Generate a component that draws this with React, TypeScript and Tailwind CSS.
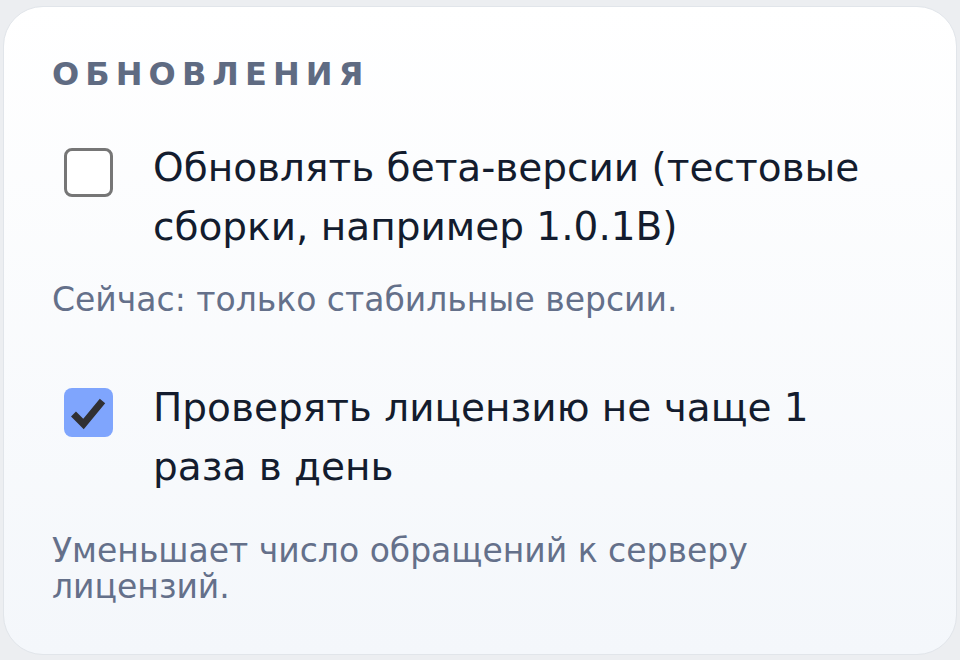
import React, { useState } from "react";

function CheckRow({ label, checked, onToggle }: { label: string; checked: boolean; onToggle: () => void }) {
    return (
        <label className="flex items-start gap-[40px] pl-[12px] cursor-pointer">
            <span
                onClick={onToggle}
                className={`mt-[10px] w-[49px] h-[49px] shrink-0 rounded-[8px] flex items-center justify-center ${checked ? "bg-[#7fa5fd]" : "border-[3px] border-[#767676] bg-white"}`}
            >
                {checked && (
                    <svg width="49" height="49" viewBox="0 0 49 49" fill="none">
                        <path d="M9.5 26l10 10L38.5 13" stroke="#303033" strokeWidth="7" strokeLinecap="butt" strokeLinejoin="miter" />
                    </svg>
                )}
            </span>
            <span className="text-[39px] leading-[59px] text-[#131c2e]">{label}</span>
        </label>
    );
}

export default function App() {
    const [beta, setBeta] = useState(false);
    const [daily, setDaily] = useState(true);

    return (
        <div className="w-[960px] h-[660px] bg-[#eceef1] pt-[6px] px-[3px] pb-[5px]" style={{ fontFamily: '"DejaVu Sans", sans-serif' }}>
            <div className="h-full rounded-[40px] border border-[#e1e5ea] bg-gradient-to-b from-white to-[#f4f7fb] pl-[48px] pr-[70px] pt-[47px]">
                <h2 className="text-[32px] font-bold tracking-[0.19em] text-[#5f6b82] leading-[40px]">ОБНОВЛЕНИЯ</h2>

                <div className="mt-[44px]">
                    <CheckRow label="Обновлять бета-версии (тестовые сборки, например 1.0.1B)" checked={beta} onToggle={() => setBeta(!beta)} />
                    <p className="mt-[26px] text-[33px] leading-[36px] text-[#64708a]">Сейчас: только стабильные версии.</p>
                </div>

                <div className="mt-[60px]">
                    <CheckRow label="Проверять лицензию не чаще 1 раза в день" checked={daily} onToggle={() => setDaily(!daily)} />
                    <p className="mt-[37px] text-[33px] leading-[36px] text-[#64708a]">Уменьшает число обращений к серверу лицензий.</p>
                </div>
            </div>
        </div>
    );
}
